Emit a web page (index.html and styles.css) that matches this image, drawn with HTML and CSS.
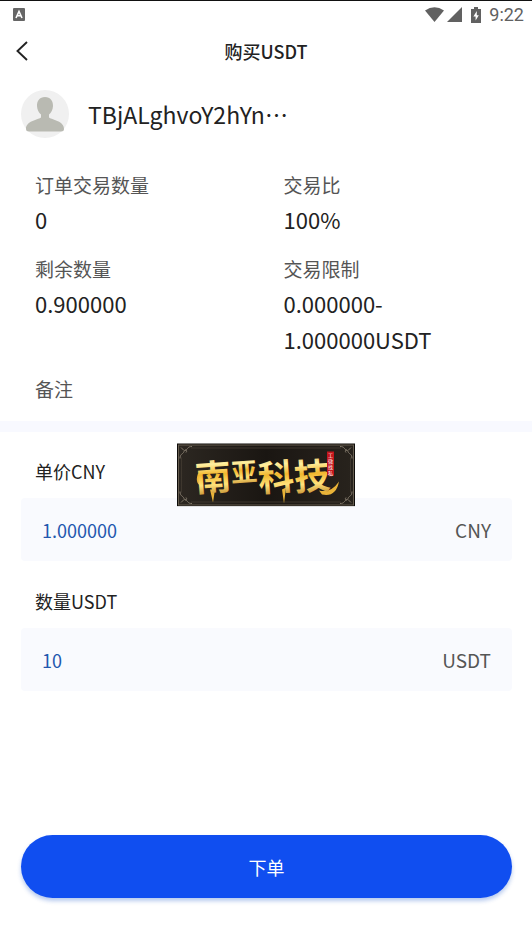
FILE: index.html
```html
<!DOCTYPE html>
<html lang="zh-CN">
<head>
  <meta charset="UTF-8" />
  <meta name="viewport" content="width=device-width, initial-scale=1.0" />
  <title>购买USDT</title>
  <link rel="stylesheet" href="styles.css">
</head>
<body>
  <div class="status-bar">
    <svg class="ime-icon" width="12" height="13" viewBox="0 0 12 13">
      <rect width="12" height="13" rx="1" fill="#666"/>
      <path d="M3 10 L6 3.5 L9 10 M4.2 7.8 H7.8" fill="none" stroke="#fff" stroke-width="1.6"/>
    </svg>
    <div class="status-right">
      <svg width="19" height="15" viewBox="0 0 19 15">
        <path d="M0 3.6 Q9.5 -3 19 3.6 L9.5 15 Z" fill="#616161"/>
      </svg>
      <svg width="15" height="15" viewBox="0 0 15 15">
        <path d="M15 0 V15 H0 Z" fill="#616161"/>
      </svg>
      <svg class="battery" width="10" height="16" viewBox="0 0 10 16">
        <path d="M3 0 H7 V2 H10 V16 H0 V2 H3 Z" fill="#616161"/>
        <path d="M5.8 4 L2.4 9.6 H4.6 V13.6 L7.8 8.2 H5.8 Z" fill="#fff"/>
      </svg>
      <span class="clock">9:22</span>
    </div>
  </div>

  <header class="nav-bar">
    <button class="back" type="button" aria-label="返回">
      <svg width="12" height="20" viewBox="0 0 12 20">
        <path d="M11 1 L1.5 10 L11 19" fill="none" stroke="#222" stroke-width="1.9"/>
      </svg>
    </button>
    <h1>购买USDT</h1>
  </header>

  <main>
    <div class="seller">
      <svg class="avatar" width="48" height="48" viewBox="0 0 48 48">
        <circle cx="24" cy="24" r="24" fill="#f0f0f0"/>
        <path d="M24 7 C18.5 7 15.8 11 16 16 C16.2 20 17.8 22.8 20 24.5 V27.5 C16 30 5 31 5 39 Q5 41.5 8 41.5 H40 Q43 41.5 43 39 C43 31 32 30 28 27.5 V24.5 C30.2 22.8 31.8 20 32 16 C32.2 11 29.5 7 24 7 Z" fill="#b9bab2"/>
      </svg>
      <span>TBjALghvoY2hYn⋯</span>
    </div>

    <dl class="details">
      <div>
        <dt>订单交易数量</dt>
        <dd>0</dd>
      </div>
      <div>
        <dt>交易比</dt>
        <dd>100%</dd>
      </div>
      <div>
        <dt>剩余数量</dt>
        <dd>0.900000</dd>
      </div>
      <div>
        <dt>交易限制</dt>
        <dd>0.000000-<wbr>1.000000USDT</dd>
      </div>
      <div>
        <dt>备注</dt>
      </div>
    </dl>

    <form class="order-form" id="orderForm">
      <label for="price">单价CNY</label>
      <div class="field">
        <input id="price" type="text" inputmode="decimal" value="1.000000">
        <span>CNY</span>
      </div>
      <label for="amount">数量USDT</label>
      <div class="field">
        <input id="amount" type="text" inputmode="decimal" value="10">
        <span>USDT</span>
      </div>
    </form>
  </main>

  <footer>
    <button class="submit" type="submit" form="orderForm">下单</button>
  </footer>

  <svg class="watermark" width="178" height="63" viewBox="0 0 178 63">
    <defs>
      <linearGradient id="gold" x1="0" y1="0" x2="0" y2="1">
        <stop offset="0" stop-color="#c98a1c"/>
        <stop offset="0.3" stop-color="#fff0a0"/>
        <stop offset="0.5" stop-color="#f2b72e"/>
        <stop offset="0.7" stop-color="#ffe27a"/>
        <stop offset="1" stop-color="#a8680f"/>
      </linearGradient>
      <linearGradient id="plate" x1="0" y1="0" x2="1" y2="0">
        <stop offset="0" stop-color="#2c2721"/>
        <stop offset="0.5" stop-color="#1a1612"/>
        <stop offset="1" stop-color="#28231d"/>
      </linearGradient>
      <g id="corner" fill="none" stroke="#81786a" stroke-width="1">
        <path d="M3 15 C3 10 6 11 7 8 C8 5 11 7 9 9 M15 3 C10 3 11 6 8 7 M4 4 L7 7"/>
      </g>
    </defs>
    <rect width="178" height="63" fill="#0d0b09"/>
    <rect x="1.5" y="1.5" width="175" height="60" fill="url(#plate)" stroke="#665d4f"/>
    <path d="M14 4.5 H164 M14 58.5 H164 M4.5 14 V49 M173.5 14 V49" stroke="#3e372e"/>
    <use href="#corner"/>
    <use href="#corner" transform="matrix(-1 0 0 1 178 0)"/>
    <use href="#corner" transform="matrix(1 0 0 -1 0 63)"/>
    <use href="#corner" transform="matrix(-1 0 0 -1 178 63)"/>
    <path d="M21 30 Q17 41 26 43 Q22 38 24 30 Z M142 47 Q154 50 162 38 Q159 54 145 51 Z M33 46 L36 59 L38 46 Z M105 46 L107 60 L109 44 Z" fill="#e9b338"/>
    <g fill="url(#gold)">
      <text class="brand" x="18" y="47" transform="rotate(-4 36 33)">南</text>
      <text class="brand brand-small" x="54" y="38" transform="rotate(-4 67 28)">亚</text>
      <text class="brand" x="81" y="47" transform="rotate(-4 99 33)">科</text>
      <text class="brand" x="117" y="46" transform="rotate(-4 134 33)">技</text>
    </g>
    <path d="M150 8 H157 V32 L154 33 L150 31 Z" fill="#c4161c"/>
    <g class="seal">
      <text x="151" y="13">工</text>
      <text x="151" y="19">微</text>
      <text x="151" y="25">找</text>
      <text x="151" y="31">私</text>
    </g>
  </svg>
</body>
</html>
```

FILE: styles.css
```css
:root {
  --text-color: #222;
  --label-color: #555;
  --field-bg: #f9fafe;
  --primary: #104ef0;
}

* {
  box-sizing: border-box;
}

body {
  font-family: "Noto Sans CJK SC", sans-serif;
  display: flex;
  flex-direction: column;
  min-height: 100vh;
  margin: 0;
  background: #fff;
  color: var(--text-color);
}

.status-bar {
  display: flex;
  justify-content: space-between;
  align-items: center;
  height: 28px;
  padding: 0 8px 0 13px;
  border-top: 1px solid #111;
}

.status-right {
  display: flex;
  align-items: center;
  gap: 3px;
}

.battery {
  margin-left: 6px;
}

.clock {
  margin-left: 5px;
  font-family: Roboto, sans-serif;
  font-size: 18px;
  line-height: 20px;
  color: #616161;
}

.nav-bar {
  display: grid;
  grid-template-columns: 44px 1fr 44px;
  align-items: center;
  height: 46px;
}

.nav-bar h1 {
  margin: 0;
  font-size: 18px;
  font-weight: 500;
  text-align: center;
}

.back {
  display: flex;
  padding: 10px 16px;
  border: none;
  background: none;
  cursor: pointer;
}

.seller {
  display: flex;
  align-items: center;
  gap: 19px;
  padding: 16px 21px 0;
  font-size: 23px;
  line-height: 48px;
}

.avatar {
  flex-shrink: 0;
}

.details {
  display: grid;
  grid-template-columns: 1fr 1fr;
  row-gap: 15px;
  margin: 0;
  padding: 30px 0 16px 35px;
  border-bottom: 11px solid #f8f9ff;
}

.details > div {
  padding-right: 20px;
}

.details dt {
  font-size: 19px;
  line-height: 33px;
  color: var(--label-color);
}

.details dd {
  margin: 0;
  font-size: 22px;
  line-height: 36px;
}

.order-form {
  padding: 24px 20px 0 21px;
}

.order-form label {
  display: block;
  margin-bottom: 12px;
  padding-left: 14px;
  font-size: 18px;
  line-height: 30px;
}

.field {
  display: flex;
  align-items: center;
  height: 63px;
  margin-bottom: 25px;
  padding: 0 21px;
  border-radius: 4px;
  background: var(--field-bg);
  font-size: 19px;
  color: var(--label-color);
}

.field input {
  flex: 1;
  min-width: 0;
  padding: 0;
  border: none;
  outline: none;
  background: transparent;
  font: inherit;
  font-size: 18px;
  color: #2357ae;
}

footer {
  margin-top: auto;
  padding: 20px 20px 52px 21px;
}

.submit {
  display: block;
  width: 100%;
  height: 63px;
  border: none;
  border-radius: 32px;
  background: var(--primary);
  box-shadow: 0 3px 4px rgba(16, 78, 200, 0.3);
  font-family: inherit;
  font-size: 18px;
  color: #fff;
  cursor: pointer;
}

.watermark {
  position: fixed;
  top: 50%;
  left: 50%;
  transform: translate(-50%, -50%);
  pointer-events: none;
}

.brand {
  font-size: 36px;
  font-weight: 700;
}

.brand-small {
  font-size: 26px;
}

.seal {
  font-size: 5px;
  fill: #fff;
}
```
